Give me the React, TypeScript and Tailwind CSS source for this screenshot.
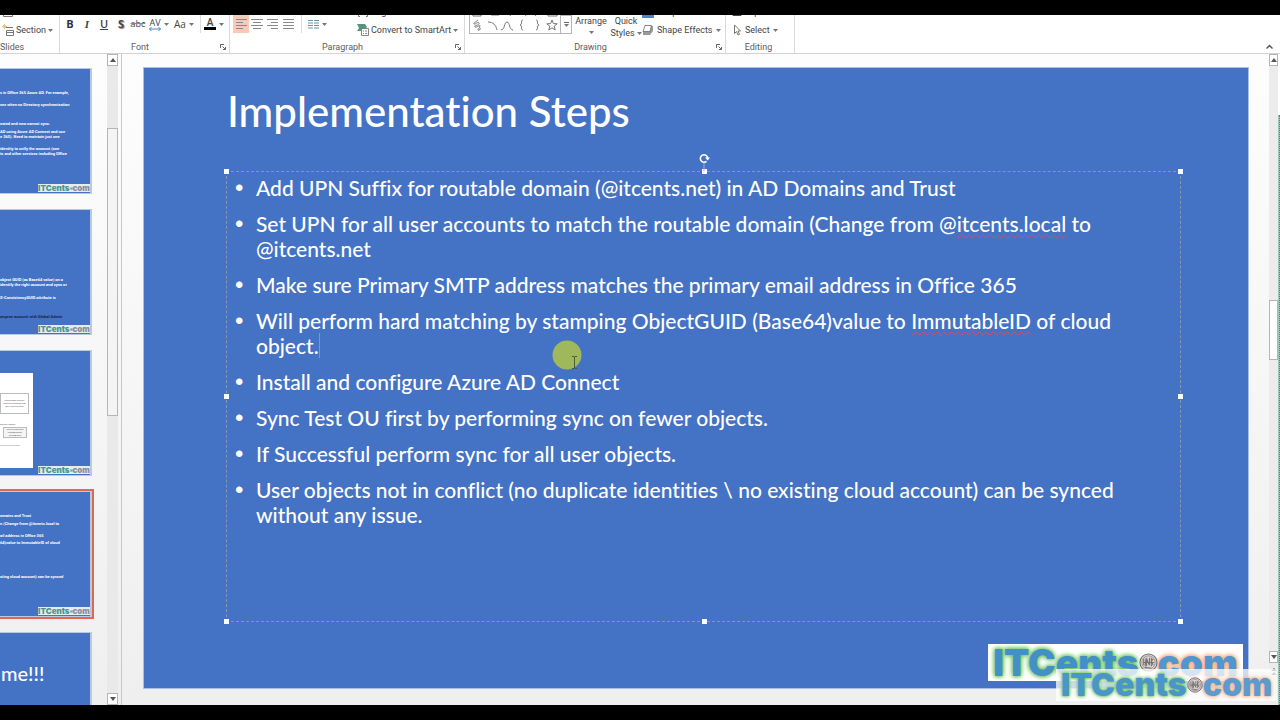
import type { ReactNode } from "react";

function Caret() {
  return (
    <svg viewBox="0 0 5 3" className="h-[3px] w-[5px] shrink-0 fill-[#777]" aria-hidden="true">
      <path d="M0 0h5L2.5 3z" />
    </svg>
  );
}

function Launcher() {
  return (
    <svg viewBox="0 0 6 6" className="size-[6px] fill-none stroke-[#666]" strokeWidth="1" aria-hidden="true">
      <path d="M.5 4V.5H4M2.5 2.5l3 3M5.500 3v2.500H3" />
    </svg>
  );
}

function Group({ name, width, launcher, labelPad, children }: { name: string; width: string; launcher?: boolean; labelPad?: string; children: ReactNode }) {
  return (
    <section aria-label={name} className={`${width} flex shrink-0 flex-col border-r border-[#dadada]`}>
      <div className="flex h-[26px] items-end overflow-hidden">{children}</div>
      <div className={`flex h-[12px] items-center ${labelPad ?? "pr-[3px]"}`}>
        <span className="flex-1 text-center text-[#5c5c5c]">{name}</span>
        {launcher && (
          <button aria-label={`${name} settings`}>
            <Launcher />
          </button>
        )}
      </div>
    </section>
  );
}

function Tool({ label, wide, active, children }: { label: string; wide?: boolean; active?: boolean; children: ReactNode }) {
  return (
    <button
      aria-label={label}
      className={`flex h-[18px] items-center justify-center gap-[3px] ${wide ? "w-[24px]" : "w-[16px]"} ${active ? "bg-[#f8cab7]" : ""}`}
    >
      {children}
    </button>
  );
}

function Lines({ d }: { d: string }) {
  return (
    <svg viewBox="0 0 12 10" className="h-[10px] w-[12px] stroke-[#888]" strokeWidth="1" aria-hidden="true">
      <path d={d} />
    </svg>
  );
}

function Divider() {
  return <span className="h-[18px] w-px shrink-0 bg-[#dcdcdc]" />;
}

function Ribbon() {
  return (
    <div className="flex h-[39px] shrink-0 overflow-hidden border-b border-[#d2d2d2] bg-white font-['Roboto',sans-serif] text-[9px] leading-[12px] text-[#444]">
      <Group name="Slides" width="w-[60px]" labelPad="pr-[36px]">
        <div className="flex flex-col pb-[2px] pl-[2px]">
          <button className="flex h-[18px] items-center gap-[2px]">
            <svg viewBox="0 0 12 12" className="size-[12px] fill-none stroke-[#777]" aria-hidden="true">
              <path d="M1.500 3.500h9v7h-9z" />
            </svg>
            Reset
          </button>
          <button className="flex h-[18px] items-center gap-[2px]">
            <svg viewBox="0 0 12 12" className="size-[12px] fill-none" aria-hidden="true">
              <path d="M4 3.500h7M4.500 6.500h7v5h-7zM4.500 8.500h7" stroke="#777" />
              <path d="M2.500 0v5M0 2.500h5M1 1l3 3M4 1L1 4" stroke="#e8b05c" strokeWidth=".7" />
            </svg>
            Section
            <Caret />
          </button>
        </div>
      </Group>

      <Group name="Font" width="w-[170px]" launcher>
        <div className="flex items-center gap-px pb-[8px] pl-[2px] font-['Open_Sans',sans-serif] text-[11px]">
          <Tool label="Bold"><b className="text-[#333]">B</b></Tool>
          <Tool label="Italic"><i className="font-['Liberation_Serif',serif] font-bold">I</i></Tool>
          <Tool label="Underline"><span className="font-semibold underline">U</span></Tool>
          <Tool label="Text shadow"><b className="text-shadow-[1px_1px_1px_#888]">S</b></Tool>
          <Tool label="Strikethrough"><span className="text-[9px] line-through decoration-[#888]">abc</span></Tool>
          <Tool label="Character spacing" wide>
            <span className="flex flex-col items-center">
              <span className="text-[9px] leading-[9px]">AV</span>
              <svg viewBox="0 0 12 4" className="h-[4px] w-[12px] fill-none stroke-[#4a86b8]" aria-hidden="true">
                <path d="M.5 2h11M2.500 0L.5 2l2 2M9.500 0l2 2-2 2" />
              </svg>
            </span>
            <Caret />
          </Tool>
          <Tool label="Change case" wide>
            <span className="text-[10px]">Aa</span>
            <Caret />
          </Tool>
          <span className="w-[2px]" />
          <Divider />
          <Tool label="Font color" wide>
            <span className="flex flex-col items-center">
              <span className="text-[10px] leading-[9px] font-semibold">A</span>
              <span className="h-[3px] w-[12px] bg-black" />
            </span>
            <Caret />
          </Tool>
        </div>
      </Group>

      <Group name="Paragraph" width="w-[235px]" launcher>
        <div className="flex w-[127px] items-center pb-[8px] pl-[3px]">
          <Tool label="Align left" active><Lines d="M1 .5h11M1 3.500h7M1 6.500h11M1 9.500h7" /></Tool>
          <Tool label="Center"><Lines d="M0 .5h12M2 3.500h8M0 6.500h12M2 9.500h8" /></Tool>
          <Tool label="Align right"><Lines d="M0 .5h11M4 3.500h7M0 6.500h11M4 9.500h7" /></Tool>
          <Tool label="Justify"><Lines d="M0 .5h11M0 3.500h11M0 6.500h11M0 9.500h11" /></Tool>
          <span className="w-[4px]" />
          <Divider />
          <span className="w-[3px]" />
          <Tool label="Columns" wide>
            <svg viewBox="0 0 11 9" className="h-[9px] w-[11px] stroke-[#6d93a5]" aria-hidden="true">
              <path d="M0 .5h5M6 .5h5M0 3h5M6 3h5M0 5.500h5M6 5.500h5M0 8h5M6 8h5" />
            </svg>
            <Caret />
          </Tool>
        </div>
        <div className="flex flex-col pb-[2px]">
          <button className="flex h-[18px] items-center gap-[2px]">
            <svg viewBox="0 0 12 12" className="size-[12px] fill-none stroke-[#777]" aria-hidden="true">
              <path d="M3 1.500H1.500v9H3M9 1.500h1.500v9H9M4 6h4M6 3v6" />
            </svg>
            Align Text
          </button>
          <button className="flex h-[18px] items-center gap-[2px] whitespace-nowrap">
            <svg viewBox="0 0 12 12" className="size-[12px] shrink-0" aria-hidden="true">
              <path d="M0 0h8l2 3-2 2H4v2H0l2-3z" fill="#569482" />
              <path d="M4.500 4.500h7v7h-7zM6 7h1M8 7h2M6 9.500h1M8 9.500h2" fill="#fff" stroke="#777" strokeWidth=".9" />
            </svg>
            Convert to SmartArt
            <Caret />
          </button>
        </div>
      </Group>

      <Group name="Drawing" width="w-[261px]" launcher>
        <div className="mb-[7px] ml-[4px] flex h-[36px] w-[103px] shrink-0 border border-[#b5b5b5]">
          <svg viewBox="0 0 90 34" className="h-[34px] w-[90px] fill-none stroke-[#666]" strokeWidth=".9" aria-hidden="true">
            <path d="M3 9h8v8H3zM21 16l4-7 4 7zM40 9c-3 3 3 4 0 8M52 9l4 8M65 9c5 2 4 5 0 8M78 9h9v8h-9z" />
            <path d="M8 21c-2 2-5 3-4 4s4-3 5-1-6 3-4 4 5-3 5-1-3 3-2 4 3-1 2-2M18 23c5 0 8 3 9 8M31 31c4 0 3-8 6-8s2 8 6 8M53 21c-3 0 0 4-3 5 3 1 0 5 3 5M66 21c3 0 0 4 3 5-3 1 0 5-3 5" />
            <path d="M82 21l1.400 3.600 3.800.2-3 2.400 1 3.700-3.200-2-3.200 2 1-3.700-3-2.400 3.800-.2z" />
          </svg>
          <button aria-label="More shapes" className="mt-auto flex h-[18px] flex-1 flex-col items-center justify-center gap-px border-t border-l border-[#b5b5b5]">
            <span className="h-px w-[5px] bg-[#666]" />
            <Caret />
          </button>
        </div>
        <button className="flex h-[26px] w-[38px] shrink-0 flex-col items-center gap-[4px]">
          Arrange
          <Caret />
        </button>
        <button className="flex h-[26px] w-[32px] shrink-0 flex-col items-center">
          Quick
          <span className="flex items-center gap-[2px]">
            Styles
            <Caret />
          </span>
        </button>
        <div className="flex flex-col pb-[2px]">
          <button className="flex h-[18px] items-center gap-[3px] whitespace-nowrap">
            <svg viewBox="0 0 12 12" className="h-[12px] w-[12px] shrink-0" aria-hidden="true">
              <path d="M0 8h12v4H0z" fill="#4a86c8" />
            </svg>
            Shape Outline
          </button>
          <button className="flex h-[18px] items-center gap-[3px] whitespace-nowrap">
            <svg viewBox="0 0 12 12" className="h-[12px] w-[12px] shrink-0" aria-hidden="true">
              <path d="M4 2h7v5l-3 4H1V8z" fill="#999" />
              <path d="M3 1.500h6.500L8 7.500H1z" fill="#fff" stroke="#777" strokeWidth=".9" />
            </svg>
            Shape Effects
            <Caret />
          </button>
        </div>
      </Group>

      <Group name="Editing" width="w-[69px]">
        <div className="flex flex-col pb-[2px] pl-[6px]">
          <button className="flex h-[18px] items-center gap-[2px]">
            <span className="w-[10px] text-[8px] underline">ac</span>
            Replace
          </button>
          <button className="flex h-[18px] items-center gap-[3px]">
            <svg viewBox="0 0 10 12" className="h-[12px] w-[10px] fill-white stroke-[#666]" strokeWidth=".9" aria-hidden="true">
              <path d="M2.500 1v8.500l2-2 1.500 3.500 1.500-.7L6 7h2.500z" />
            </svg>
            Select
            <Caret />
          </button>
        </div>
      </Group>

      <button aria-label="Collapse ribbon" className="mt-auto mr-[7px] mb-[3px] ml-auto flex size-[7px] items-center">
        <svg viewBox="0 0 7 5" className="h-[5px] w-[7px] fill-none stroke-[#555]" strokeWidth="1.500" aria-hidden="true">
          <path d="M.5 4.500l3-3 3 3" />
        </svg>
      </button>
    </div>
  );
}

function Coin({ className }: { className: string }) {
  return (
    <svg viewBox="0 0 20 20" className={className} fill="none" stroke="#77706f" aria-hidden="true">
      <circle cx="10" cy="10" r="9" fill="#d9d5d3" strokeWidth="1.200" />
      <circle cx="10" cy="10" r="7" strokeWidth=".6" />
      <path d="M5 6v7M7.500 5l-1 9M8 14V6l3 7V5M13 5v9M15 6l-2 3 2 4M4 10h12M6 15l7 1" strokeWidth="1.100" />
    </svg>
  );
}

const logoSizes = {
  tiny: { text: "text-[8px] leading-[8px]", coin: "size-[3px]", green: "text-[#4a9690]", orange: "text-[#8c8c9c]" },
  medium: {
    text: "text-[32px] leading-[32px]",
    coin: "size-[16px]",
    green: "text-[#4b96c9] text-shadow-[0_0_3px_#7cc96a,0_0_3px_#7cc96a,0_0_5px_#a5dd98]",
    orange: "text-[#5b9bd0] text-shadow-[0_0_3px_#f5b48c,0_0_3px_#f5b48c,0_0_6px_#f8c9ac]",
  },
  large: {
    text: "text-[37px] leading-[37px]",
    coin: "size-[19px]",
    green: "text-[#4390c8] text-shadow-[0_0_4px_#74c562,0_0_4px_#74c562,0_0_6px_#a5dd98]",
    orange: "text-[#5096cf] text-shadow-[0_0_4px_#f5a978,0_0_4px_#f5a978,0_0_7px_#f8c9ac]",
  },
};

function Logo({ size }: { size: keyof typeof logoSizes }) {
  const s = logoSizes[size];
  return (
    <span className={`flex items-center justify-center font-['Inter',sans-serif] font-black ${s.text}`}>
      <span className={s.green}>ITCents</span>
      <Coin className={`${s.coin} relative z-10 shrink-0`} />
      <span className={s.orange}>com</span>
    </span>
  );
}

function Thumb({ selected, label, children }: { selected?: boolean; label: string; children: ReactNode }) {
  return (
    <li>
      <button
        aria-label={label}
        className={`relative flex h-[126px] w-[92px] flex-col overflow-hidden border-y border-r-2 border-[#b9c9e4] bg-[#4472c4] text-left font-['Roboto',sans-serif] text-[4px] leading-[5px] font-bold whitespace-nowrap text-white ${
          selected ? "outline-[2px] outline-[#dd6a50]" : ""
        }`}
      >
        {children}
        <span className="absolute right-0 bottom-px w-[52px] overflow-hidden bg-[#e4eeee]">
          <Logo size="tiny" />
        </span>
      </button>
    </li>
  );
}

function ArrowButton({ label, down }: { label: string; down?: boolean }) {
  return (
    <button aria-label={label} className="flex h-[12px] w-full shrink-0 items-center justify-center border border-[#b5b5b5] bg-white">
      <svg viewBox="0 0 6 4" className="h-[4px] w-[6px] fill-[#555]" aria-hidden="true">
        <path d={down ? "M0 0h6L3 4z" : "M0 4h6L3 0z"} />
      </svg>
    </button>
  );
}

function Thumbnails() {
  return (
    <aside aria-label="Slides" className="flex w-[122px] shrink-0 border-r border-[#c8c8c8]">
      <ul className="flex min-w-0 flex-1 flex-col gap-[15px] overflow-hidden pt-[14px]">
        <Thumb label="Slide 1">
          <span className="mt-[21px]">s in Office 365 Azure AD. For example,</span>
          <span className="mt-[7px]">ces when no Directory synchronization</span>
          <span className="mt-[14px]">eated and now cannot sync.</span>
          <span className="mt-[3px]">AD using Azure AD Connect and use</span>
          <span>e 365). Need to maintain just one</span>
          <span className="mt-[7px]">identity to unify the account (one</span>
          <span>ts and other services including Office</span>
        </Thumb>
        <Thumb label="Slide 2">
          <span className="mt-[67px]">object GUID (as Base64 value) on a</span>
          <span>identify the right account and sync or</span>
          <span className="mt-[8px]">S-ConsistencyGUID attribute is</span>
          <span className="mt-[14px] text-[#14264f]">anyone account with Global Admin</span>
        </Thumb>
        <Thumb label="Slide 3">
          <span className="mt-[22px] flex h-[95px] w-[33px] flex-col bg-white pt-[20px] text-[2px] leading-[3px] font-normal text-[#555]">
            <span className="flex h-[21px] w-[29px] flex-col justify-center overflow-hidden border border-[#bbb] text-center">
              <span>synchronized directory</span>
              <span>objects are matched with</span>
              <span>their cloud accounts</span>
            </span>
            <span className="mt-[9px]">attribute in Azure</span>
            <span className="mt-px ml-[3px] flex h-[11px] w-[24px] flex-col justify-center overflow-hidden border border-[#bbb] bg-[#f4f4f4] text-center">
              <span>userPrincipalName</span>
              <span>proxyAddresses</span>
              <span>sourceAnchor</span>
            </span>
            <span className="mt-[7px] h-px w-[20px] bg-[#ccc]" />
          </span>
        </Thumb>
        <Thumb label="Slide 4" selected>
          <span className="mt-[21px]">omains and Trust</span>
          <span className="mt-[3px]">n (Change from @itcents.local to</span>
          <span className="mt-[7px]">ail address in Office 365</span>
          <span className="mt-[2px]">64)value to ImmutableID of cloud</span>
          <span className="mt-[29px]">sting cloud account) can be synced</span>
        </Thumb>
        <Thumb label="Slide 5">
          <span className="mt-[28px] pl-px font-['Lato',sans-serif] text-[20px] leading-[24px] font-medium">me!!!</span>
        </Thumb>
      </ul>
      <div className="mr-[3px] flex w-[11px] flex-col bg-[#e9e9e9]">
        <ArrowButton label="Scroll slides up" />
        <div className="flex-[62]" />
        <div className="flex-[287] border border-[#b5b5b5] bg-[#f4f4f4]" />
        <div className="flex-[278]" />
        <ArrowButton label="Scroll slides down" down />
      </div>
    </aside>
  );
}

const handles = [
  "-top-[3px] -left-[3px]",
  "-top-[3px] left-1/2 -ml-[2px]",
  "-top-[3px] -right-[3px]",
  "top-1/2 -left-[3px] -mt-[3px]",
  "top-1/2 -right-[3px] -mt-[3px]",
  "-bottom-[3px] -left-[3px]",
  "-bottom-[3px] left-1/2 -ml-[2px]",
  "-bottom-[3px] -right-[3px]",
];

function Misspelt({ children }: { children: ReactNode }) {
  return <span className="underline decoration-[#e0456a] decoration-wavy decoration-1 underline-offset-2">{children}</span>;
}

const steps: ReactNode[] = [
  "Add UPN Suffix for routable domain (@itcents.net) in AD Domains and Trust",
  <>Set UPN for all user accounts to match the routable domain (Change from @<Misspelt>itcents.local</Misspelt> to @itcents.net</>,
  "Make sure Primary SMTP address matches the primary email address in Office 365",
  <>Will perform hard matching by stamping ObjectGUID (Base64)value to <Misspelt>ImmutableID</Misspelt> of cloud object.<span className="border-l border-[#7b97c8]" /></>,
  "Install and configure Azure AD Connect",
  "Sync Test OU first by performing sync on fewer objects.",
  "If Successful perform sync for all user objects.",
  "User objects not in conflict (no duplicate identities \\ no existing cloud account) can be synced without any issue.",
];

function Slide() {
  return (
    <article className="relative flex flex-1 flex-col border border-[#a9bfe6] bg-[#4472c4] pr-[67px] pl-[82px] font-['Lato',sans-serif] font-medium text-white [font-variant-ligatures:none]">
      <h1 className="flex h-[103px] shrink-0 items-start pt-[17px] pl-px text-[42px] leading-[52px]">Implementation Steps</h1>
      <div className="relative mb-[66px] flex-1 border border-dashed border-[#8496b0] pt-[3px] pr-[8px] pl-[8px]">
        <ul className="flex flex-col gap-[11px] text-[21px] leading-[25px]">
          {steps.map((step, i) => (
            <li key={i} className="flex">
              <span className="w-[21px] shrink-0 font-['Liberation_Sans',sans-serif] text-[24px]" aria-hidden="true">•</span>
              <span>{step}</span>
            </li>
          ))}
        </ul>
        {handles.map((place) => (
          <span key={place} className={`absolute size-[5px] bg-white ${place}`} />
        ))}
        <svg viewBox="0 0 12 18" className="absolute -top-[19px] left-1/2 -ml-[6px] h-[18px] w-[12px] fill-none" aria-hidden="true">
          <path d="M6 10v8" stroke="#9eb0cf" />
          <path d="M8.500 8.300A3.700 3.700 0 1 1 9.700 5" stroke="#fff" strokeWidth="1.600" />
          <path d="M7 4.600h5L9.700 7.600z" fill="#fff" />
        </svg>
        <svg viewBox="0 0 30 30" className="absolute top-[168px] left-[325px] size-[30px]" aria-hidden="true">
          <circle cx="15" cy="15" r="14.500" fill="#a0b85c" />
          <path d="M20 16.500h2l.5.500.5-.5h2M22.500 17v11M20 28.500h2l.5-.5.5.5h2" fill="none" stroke="#4b5a3c" />
        </svg>
      </div>
      <div className="absolute right-[5px] bottom-[7px] w-[255px] bg-white">
        <Logo size="large" />
      </div>
    </article>
  );
}

export default function App() {
  return (
    <div className="relative flex h-screen flex-col overflow-hidden bg-black pt-[15px] pb-[15px]">
      <Ribbon />
      <div className="flex min-h-0 flex-1 bg-linear-to-b from-[#fdfdfd] to-[#efefef]">
        <Thumbnails />
        <main className="flex min-w-0 flex-1 pt-[13px] pr-[20px] pb-[16px] pl-[21px]">
          <Slide />
        </main>
        <div className="flex w-[9px] flex-col bg-[#ececec]">
          <ArrowButton label="Scroll up" />
          <div className="flex-[235]" />
          <div className="flex-[58] border border-[#b5b5b5] bg-white" />
          <div className="flex-[293]" />
          <ArrowButton label="Scroll down" down />
          <button aria-label="Previous slide" className="flex h-[16px] items-center justify-center">
            <svg viewBox="0 0 6 7" className="h-[7px] w-[6px] fill-[#555]" aria-hidden="true">
              <path d="M0 3h6L3 0zM0 7h6L3 4z" />
            </svg>
          </button>
          <div className="h-[26px]" />
        </div>
        <div className="flex w-[2px] flex-col bg-white pt-[61px]">
          <div className="flex-1 border-r border-dotted border-[#3f8f72] bg-[#9cc7b4]" />
        </div>
      </div>
      <div className="absolute right-[3px] bottom-[19px] z-20 w-[221px] bg-white/75">
        <Logo size="medium" />
      </div>
    </div>
  );
}
